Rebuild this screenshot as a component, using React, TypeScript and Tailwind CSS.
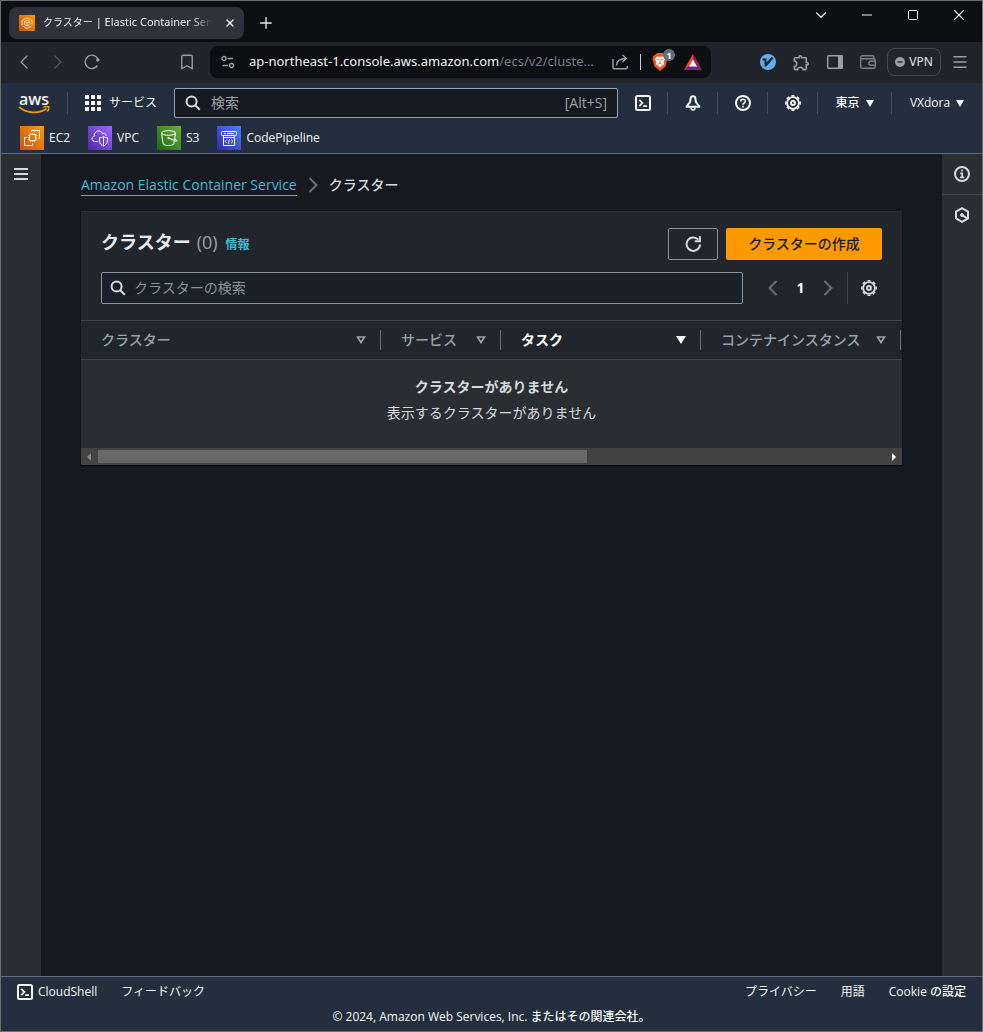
import type { ReactNode } from 'react';
import {
  Bookmark,
  ChevronDown,
  ChevronLeft,
  ChevronRight,
  Menu,
  Minus,
  Plus,
  Square,
  X,
} from 'lucide-react';
import { MdOutlineExtension } from 'react-icons/md';

function Icon({ children }: { children: ReactNode }) {
  return (
    <svg
      viewBox="0 0 16 16"
      className="size-4 shrink-0"
      fill="none"
      stroke="currentColor"
      strokeWidth="2"
      aria-hidden="true"
    >
      {children}
    </svg>
  );
}

const SearchIcon = () => (
  <Icon>
    <circle cx="6.6" cy="6.6" r="5" />
    <path d="m10.2 10.2 4.6 4.6" />
  </Icon>
);

const ShellIcon = () => (
  <Icon>
    <rect x="1" y="1" width="14" height="14" rx="1.5" />
    <path d="m4.2 4.8 3.2 3.2-3.2 3.2M8.2 11.2H12" strokeWidth="1.7" />
  </Icon>
);

const BellIcon = () => (
  <Icon>
    <path d="M8 1.200C6.600 1.200 5.800 2.100 5.600 3.500L5.200 6.500C5 8 2.800 9.300 1.500 11.800h13C13.200 9.300 11 8 10.800 6.500l-.4-3C10.200 2.100 9.400 1.200 8 1.200z" strokeLinejoin="round" />
    <path d="M6 12.200c0 3.600 4 3.600 4 0" strokeWidth="1.700" />
  </Icon>
);

const HelpIcon = () => (
  <Icon>
    <circle cx="8" cy="8" r="7" />
    <path d="M5.700 6.600c0-1.500 1-2.300 2.300-2.300s2.300.8 2.300 2c0 1.700-2.300 1.700-2.300 3.400M8 10.700v1.700" strokeWidth="1.600" />
  </Icon>
);

const GearIcon = () => (
  <Icon>
    <circle cx="8" cy="8" r="5.900" strokeWidth="1.900" />
    <circle cx="8" cy="8" r="7.200" strokeWidth="1.500" pathLength="16" strokeDasharray="1.100 .9" strokeDashoffset="0.550" />
    <circle cx="8" cy="8" r="2" strokeWidth="1.900" />
  </Icon>
);

const RefreshIcon = () => (
  <Icon>
    <path d="M15 8.500A6.700 6.700 0 1 1 13.300 3.700" />
    <path d="M14.900.3v5H9.800" />
  </Icon>
);

const InfoIcon = () => (
  <Icon>
    <circle cx="8" cy="8" r="7" />
    <path d="M8 3.600v2M6.200 7.300h2v4.200M6 11.300h4.200" strokeWidth="1.700" />
  </Icon>
);

const HexIcon = () => (
  <Icon>
    <path d="M8 1.200 14 4.600v6.800l-6 3.400-6-3.400V4.600z" />
    <circle cx="8" cy="8" r="1.500" fill="currentColor" strokeWidth="1" />
    <path d="m8.500 8.500 5 2.800" />
  </Icon>
);

const MenuBars = () => (
  <Icon>
    <path d="M1 3h14M1 8h14M1 13h14" />
  </Icon>
);

function Angle({ dir }: { dir: 'left' | 'right' }) {
  return (
    <Icon>
      <path d={dir === 'left' ? 'm11.500 1-7 7 7 7' : 'm4.500 1 7 7-7 7'} />
    </Icon>
  );
}

const MenuCaret = () => (
  <svg viewBox="0 0 8 7" className="h-[7px] w-2 shrink-0" aria-hidden="true">
    <path d="M0 0h8L4 7z" fill="currentColor" />
  </svg>
);

function SortCaret({ active }: { active: boolean }) {
  return (
    <svg viewBox="0 0 10 8" className="h-2 w-2.5 shrink-0" aria-hidden="true">
      {active ? (
        <path d="M0 0h10L5 8z" fill="currentColor" />
      ) : (
        <path d="M1.500 1h7L5 6.500z" fill="none" stroke="currentColor" strokeWidth="1.700" />
      )}
    </svg>
  );
}

const EcsFavicon = () => (
  <svg viewBox="0 0 16 16" className="size-4 shrink-0" aria-hidden="true">
    <defs>
      <linearGradient id="ecs" x1="0" y1="1" x2="1" y2="0">
        <stop stopColor="#c8511b" />
        <stop offset="1" stopColor="#f90" />
      </linearGradient>
    </defs>
    <path fill="url(#ecs)" d="M0 0h16v16H0z" />
    <g fill="none" stroke="#ffe0b8" strokeWidth=".9">
      <path d="M3 10.500v-5L8 2.700l5 2.800v4M12.500 11 8 13.500 3.700 11" />
      <path d="m8 5 2.700 1.500v3L8 11 5.300 9.500v-3zM5.300 6.500 8 8l2.700-1.500M8 8v3" />
    </g>
  </svg>
);

function Tile({ id, from, to, children }: { id: string; from: string; to: string; children: ReactNode }) {
  return (
    <svg viewBox="0 0 24 24" className="size-6 shrink-0" aria-hidden="true">
      <defs>
        <linearGradient id={id} x1="0" y1="1" x2="1" y2="0">
          <stop stopColor={from} />
          <stop offset="1" stopColor={to} />
        </linearGradient>
      </defs>
      <path fill={`url(#${id})`} d="M0 0h24v24H0z" />
      <g fill="none" stroke="#fff" strokeWidth="1" strokeLinejoin="round">
        {children}
      </g>
    </svg>
  );
}

const favorites: { name: string; icon: ReactNode }[] = [
  {
    name: 'EC2',
    icon: (
      <Tile id="ec2" from="#c8511b" to="#f90">
        <rect x="9.500" y="8.500" width="6" height="6" />
        <path
          d="M10.500 7v1.500M12.500 7v1.500M14.500 7v1.500M10.500 14.500V16M12.500 14.500V16M14.500 14.500V16M8 9.500h1.500M8 11.500h1.500M8 13.500h1.500M15.500 9.500H17M15.500 11.500H17M15.500 13.500H17"
          strokeWidth=".8"
        />
        <path d="M11.500 6V4.500h8v8H18M7 11.500H4.500v8h8V17.500" />
      </Tile>
    ),
  },
  {
    name: 'VPC',
    icon: (
      <Tile id="vpc" from="#4d27a8" to="#a166ff">
        <path d="M10 15.500H7.200C3.500 15.500 3 10.800 6.300 10.200 5.800 4.500 13 3 14.500 7.700c2-1 3.600.3 3.700 2.300" />
        <path d="M15.500 10.500c1.300 1 2.300 1.200 4 1.200v3.300c0 2.500-1.800 4-4 5-2.200-1-4-2.500-4-5v-3.300c1.700 0 2.700-.2 4-1.200zM15.500 11v8" />
      </Tile>
    ),
  },
  {
    name: 'S3',
    icon: (
      <Tile id="s3" from="#1b660f" to="#6cae3e">
        <ellipse cx="11.500" cy="7" rx="7" ry="2.300" />
        <path d="m4.500 7 1.700 11c1.500 2 9 2 10.600 0L18.500 7M11.500 12l7.500 3.200c1.500.3.700-1.500-1-2.500" />
        <circle cx="11.500" cy="12" r=".7" fill="#fff" />
      </Tile>
    ),
  },
  {
    name: 'CodePipeline',
    icon: (
      <Tile id="pipeline" from="#2e27ad" to="#527fff">
        <rect x="4.500" y="5.500" width="15" height="4" rx="1" />
        <path d="M6.500 9.500v10h11v-10M6.500 11.500h11M7 7.500h1.500M10 7.500h7" />
        <path d="m9.800 13.500-1.800 1.800 1.800 1.800M14.200 13.500l1.800 1.800-1.800 1.800M12.600 13l-1.200 4.800" strokeWidth=".9" />
      </Tile>
    ),
  },
];

function BrowserTabs() {
  return (
    <div className="flex h-[41px] bg-[#0d0e12]">
      <div className="flex flex-1 items-center gap-2 pl-2 pt-0.5">
        <div className="flex h-8 w-[235px] items-center gap-2 rounded-lg bg-[#2f323b] pl-2.5 pr-1 text-[#eceef2]">
          <EcsFavicon />
          <span className="w-[171px] overflow-hidden whitespace-nowrap text-[11px] [mask-image:linear-gradient(to_right,black_88%,transparent)]">
            <span className="text-[10px]">クラスター</span> | Elastic Container Service
          </span>
          <button aria-label="タブを閉じる" className="flex size-5 items-center justify-center">
            <X className="size-3" strokeWidth={3} />
          </button>
        </div>
        <button aria-label="新しいタブ" className="flex size-7 items-center justify-center text-[#e6e8ec]">
          <Plus className="size-[18px]" strokeWidth={1.8} />
        </button>
      </div>
      <div className="flex h-7 text-[#eceef2]">
        <button aria-label="タブを検索" className="flex w-[46px] items-center justify-center">
          <ChevronDown className="size-[18px]" strokeWidth={1.5} />
        </button>
        <button aria-label="最小化" className="flex w-[46px] items-center justify-center">
          <Minus className="size-4" strokeWidth={1.5} />
        </button>
        <button aria-label="最大化" className="flex w-[46px] items-center justify-center">
          <Square className="size-3" strokeWidth={2} />
        </button>
        <button aria-label="閉じる" className="flex w-[46px] items-center justify-center">
          <X className="size-[18px]" strokeWidth={1.5} />
        </button>
      </div>
    </div>
  );
}

function BrowserToolbar() {
  return (
    <div className="flex h-[41px] items-center bg-[#21242b] pb-px text-[#9a9fac]">
      <div className="flex flex-1 items-center pl-1.5">
        <button aria-label="戻る" className="flex w-[34px] justify-center">
          <ChevronLeft className="size-6" strokeWidth={1.3} />
        </button>
        <button aria-label="進む" className="flex w-[34px] justify-center text-[#545865]">
          <ChevronRight className="size-6" strokeWidth={1.3} />
        </button>
        <button aria-label="再読み込み" className="flex w-[34px] justify-center">
          <svg viewBox="0 0 18 18" className="size-[18px]" fill="none" stroke="currentColor" strokeWidth="1.400">
            <path d="M14.500 12.500A6.700 6.700 0 1 1 14.800 5.800" />
            <circle cx="14.800" cy="7" r="1.700" fill="currentColor" stroke="none" />
          </svg>
        </button>
      </div>
      <button aria-label="ブックマーク" className="flex w-[46px] justify-center">
        <Bookmark className="size-[18px]" strokeWidth={1.8} />
      </button>
      <div className="flex h-8 w-[501px] items-center rounded-lg bg-[#0d0e12] pl-[11px] pr-[9px]">
        <svg viewBox="0 0 14 14" className="mr-3.5 size-3.5 shrink-0" fill="none" stroke="currentColor" strokeWidth="1.300">
          <circle cx="3" cy="3.500" r="2" />
          <path d="M6.500 3.500H12M1.500 10.500H7" />
          <circle cx="10.500" cy="10.500" r="2" />
        </svg>
        <span className="min-w-0 flex-1 whitespace-nowrap text-[13px] text-[#767b88]">
          <span className="text-[#f2f3f5]">ap-northeast-1.console.aws.amazon.com</span>/ecs/v2/cluste…
        </span>
        <button aria-label="共有" className="ml-3 flex">
          <svg viewBox="0 0 18 18" className="size-[18px]" fill="none" stroke="currentColor" strokeWidth="1.400">
            <path d="M2 6v8.500c0 .8.500 1.300 1.300 1.300H15c.8 0 1.300-.5 1.300-1.300V13" />
            <path d="M5.500 12.500c.2-4.500 3-7 9.500-7M11.500 2l3.700 3.500-3.700 3.500" />
          </svg>
        </button>
        <span className="mx-[11px] h-4 w-px bg-[#c5c8ce]" />
        <button aria-label="Brave Shields" className="relative flex">
          <svg viewBox="0 0 16 18" className="h-[18px] w-4" aria-hidden="true">
            <path d="M5 0h6l1.500 1.500L15 3l.5 3-2 7.500L8 18l-5.500-4.500-2-7.500L1 3l2.500-1.500z" fill="#f0561f" />
            <path d="m8 4 2.800-.8 2.400 3-1.700 2.800.7 2L8 14.300 3.800 11l.7-2-1.700-2.800 2.400-3z" fill="#fff" />
            <path d="M4.700 6 7 7M11.300 6 9 7M8 7.500V10M6 11.500 8 10l2 1.500" fill="none" stroke="#f0561f" strokeWidth=".9" />
          </svg>
          <span className="absolute -right-[7px] -top-1 flex size-3 items-center justify-center rounded-full bg-[#686d7a] text-[9px] font-bold leading-none text-white">
            1
          </span>
        </button>
        <button aria-label="Brave Rewards" className="ml-4 flex">
          <svg viewBox="0 0 18 16" className="h-4 w-[18px]" aria-hidden="true">
            <path d="M9 0v6.500L5.500 12 0 16z" fill="#ff4724" />
            <path d="M9 0v6.500l3.500 5.500L18 16z" fill="#9e1f63" />
            <path d="m0 16 5.500-4h7l5.500 4z" fill="#662d91" />
            <path d="m9 5.500 4 7H5z" fill="#fff" />
          </svg>
        </button>
      </div>
      <div className="flex w-[271px] shrink-0 items-center justify-end pr-[13px]">
        <button aria-label="Vimium" className="flex w-8 justify-center">
          <svg viewBox="0 0 16 16" className="size-4" aria-hidden="true">
            <circle cx="8" cy="8" r="8" fill="#62aee6" />
            <path d="M2.500 4.500h4v4L11.500 3l2 1-7 8.500h-2v-6h-2z" fill="#17222e" />
          </svg>
        </button>
        <button aria-label="拡張機能" className="flex w-[34px] justify-center">
          <MdOutlineExtension className="size-[19px]" />
        </button>
        <button aria-label="サイドバー" className="flex w-[33px] justify-center">
          <svg viewBox="0 0 16 14" className="h-3.5 w-4" aria-hidden="true">
            <rect x=".7" y=".7" width="14.600" height="12.600" rx="1" fill="none" stroke="currentColor" strokeWidth="1.400" />
            <path d="M11 0h4.500v14H11z" fill="currentColor" />
          </svg>
        </button>
        <button aria-label="ウォレット" className="flex w-[34px] justify-center text-[#7b7f8c]">
          <svg viewBox="0 0 16 14" className="h-3.5 w-4" fill="none" stroke="currentColor" strokeWidth="1.400" aria-hidden="true">
            <path d="M15.200 10.500v1.300c0 .8-.6 1.500-1.500 1.500H2.200c-.8 0-1.500-.7-1.500-1.500V2.200C.7 1.400 1.400.7 2.200.7h10.300c.8 0 1.300.5 1.300 1.300v1.500M.9 3.700h12.800c.9 0 1.500.6 1.500 1.500v.8" />
            <path d="M15.300 6.300h-4.500a2 2 0 0 0 0 4h4.500z" />
          </svg>
        </button>
        <button className="ml-0.5 flex h-7 w-[54px] items-center justify-center gap-1 rounded-lg border border-[#464a56] text-xs text-[#e3e5ea]">
          <svg viewBox="0 0 10 10" className="size-2.5" aria-hidden="true">
            <circle cx="5" cy="5" r="5" fill="#9a9fac" />
            <path d="M2.500 5h5" stroke="#21242b" strokeWidth="1.400" />
          </svg>
          VPN
        </button>
        <button aria-label="メニュー" className="ml-2.5 flex">
          <Menu className="size-[18px]" strokeWidth={1.8} />
        </button>
      </div>
    </div>
  );
}

function AwsLogo() {
  return (
    <a href="#home" aria-label="AWS" className="flex flex-col items-center text-[#f2f3f3]">
      <span className="text-base font-semibold leading-[14px]">aws</span>
      <svg viewBox="0 0 32 8" className="h-2 w-8" fill="none" stroke="#f90" strokeWidth="1.700" aria-hidden="true">
        <path d="M.8.8C9 7.800 21.500 7.800 28.500 2.800" />
        <path d="M25.300 1.200c2.500-.8 5.700-.7 5.700-.2s-.5 3.200-1.800 4.600" strokeWidth="1.400" />
      </svg>
    </a>
  );
}

function HeaderButton({ label, children }: { label: string; children: ReactNode }) {
  return (
    <button aria-label={label} className="flex h-[22px] w-[50px] items-center justify-center border-r border-[#414d5c]">
      {children}
    </button>
  );
}

function ConsoleHeader() {
  return (
    <header className="border-b border-[#5f6b7a] bg-[#232f3e] pb-[3px] text-[#f6f7f7]">
      <div className="flex h-10 items-center">
        <div className="flex h-[22px] w-[67px] items-center justify-center border-r border-[#414d5c]">
          <AwsLogo />
        </div>
        <button className="flex items-center gap-2 px-[17px] text-xs">
          <svg viewBox="0 0 16 16" className="size-4" fill="currentColor" aria-hidden="true">
            <path d="M0 0h4v4H0zM6 0h4v4H6zM12 0h4v4h-4zM0 6h4v4H0zM6 6h4v4H6zM12 6h4v4h-4zM0 12h4v4H0zM6 12h4v4H6zM12 12h4v4h-4z" />
          </svg>
          サービス
        </button>
        <label className="flex h-[30px] min-w-0 flex-1 items-center gap-2.5 rounded-xs border border-[#95a5a6] bg-[#16191f] px-2.5 text-sm text-[#95a5a6]">
          <span className="text-[#d5dbdb]">
            <SearchIcon />
          </span>
          <input
            type="search"
            aria-label="検索"
            placeholder="検索"
            className="min-w-0 flex-1 bg-transparent outline-none placeholder:text-[#95a5a6]"
          />
          <span>[Alt+S]</span>
        </label>
        <HeaderButton label="CloudShell">
          <ShellIcon />
        </HeaderButton>
        <HeaderButton label="通知">
          <BellIcon />
        </HeaderButton>
        <HeaderButton label="ヘルプ">
          <HelpIcon />
        </HeaderButton>
        <HeaderButton label="設定">
          <GearIcon />
        </HeaderButton>
        <button className="flex h-[22px] w-[74px] items-center justify-center gap-1.5 border-r border-[#414d5c] text-xs font-medium">
          東京 <MenuCaret />
        </button>
        <button className="flex h-[22px] w-[90px] items-center justify-center gap-1.5 text-xs font-medium">
          VXdora <MenuCaret />
        </button>
      </div>
      <nav aria-label="お気に入り" className="flex items-center gap-[18px] px-[19px] pt-[3px]">
        {favorites.map((item) => (
          <a key={item.name} href={`#${item.name}`} className="flex items-center gap-[5px] text-xs font-medium">
            {item.icon}
            {item.name}
          </a>
        ))}
      </nav>
    </header>
  );
}

const columns = [
  { label: 'クラスター', width: 'w-[300px]', active: false },
  { label: 'サービス', width: 'w-[120px]', active: false },
  { label: 'タスク', width: 'w-[200px]', active: true },
  { label: 'コンテナインスタンス', width: 'w-[200px]', active: false },
];

function ClustersPanel() {
  return (
    <section className="mt-[15px] border-t border-[#2a2e33] bg-[#21252c] text-sm text-[#d5dbdb] shadow-[0_1px_1px_#000]">
      <div className="flex items-start justify-between px-5 pt-4">
        <h1 className="flex items-baseline gap-1.5 text-lg font-bold leading-7 text-[#eaeded]">
          クラスター
          <span className="font-normal text-[#95a5a6]">(0)</span>
          <a href="#info" className="ml-0.5 text-xs font-bold text-[#44b9d6]">
            情報
          </a>
        </h1>
        <div className="flex gap-2">
          <button
            aria-label="更新"
            className="flex h-8 w-[50px] items-center justify-center rounded-xs border border-[#879596] bg-[#21252c]"
          >
            <RefreshIcon />
          </button>
          <button className="flex h-8 w-[156px] items-center justify-center rounded-xs bg-[#f90] font-medium text-[#16191f]">
            クラスターの作成
          </button>
        </div>
      </div>
      <div className="flex items-center px-5 pb-4 pt-3">
        <label className="flex h-8 min-w-0 flex-1 items-center gap-2 rounded-xs border border-[#879596] bg-[#1a2029] px-2">
          <SearchIcon />
          <input
            type="search"
            aria-label="クラスターの検索"
            placeholder="クラスターの検索"
            className="min-w-0 flex-1 bg-transparent outline-none placeholder:text-[#879596]"
          />
        </label>
        <div className="ml-[22px] flex items-center">
          <button aria-label="前のページ" className="text-[#687078]">
            <Angle dir="left" />
          </button>
          <button className="w-[39px] text-center font-bold text-white">1</button>
          <button aria-label="次のページ" className="text-[#687078]">
            <Angle dir="right" />
          </button>
        </div>
        <span className="ml-[11px] h-8 w-px bg-[#414750]" />
        <button aria-label="設定" className="ml-[13px] mr-[5px] flex">
          <GearIcon />
        </button>
      </div>
      <div className="overflow-hidden">
        <table className="w-full table-fixed border-collapse">
          <thead>
            <tr className="h-[39px] border-y border-[#414750]">
              {columns.map((col) => (
                <th
                  key={col.label}
                  className={`${col.width} p-0 text-left ${col.active ? 'font-bold text-white' : 'font-medium text-[#95a5a6]'}`}
                >
                  <button className="flex h-5 w-full items-center justify-between border-r border-[#687078] pl-5 pr-3.5">
                    {col.label}
                    <SortCaret active={col.active} />
                  </button>
                </th>
              ))}
              <td className="p-0" />
            </tr>
          </thead>
          <tbody>
            <tr className="bg-[#2a2e33]">
              <td colSpan={5} className="px-5 pb-6 pt-4 text-center">
                <b className="block leading-[22px]">クラスターがありません</b>
                <span className="mt-1 block leading-[22px]">表示するクラスターがありません</span>
              </td>
            </tr>
          </tbody>
        </table>
      </div>
      <div className="flex h-[17px] items-center bg-[#424242]" aria-hidden="true">
        <svg viewBox="0 0 4 8" className="mx-1.5 h-2 w-1" fill="#868686">
          <path d="M4 0v8L0 4z" />
        </svg>
        <div className="flex-1">
          <div className="ml-px h-[13px] w-[62%] bg-[#686868]" />
        </div>
        <svg viewBox="0 0 4 8" className="mx-1.5 h-2 w-1" fill="#fff">
          <path d="M0 0v8l4-4z" />
        </svg>
      </div>
    </section>
  );
}

export default function App() {
  return (
    <div className="flex min-h-screen flex-col border border-[#6c6c6e] bg-[#16191f] font-['Open_Sans','Noto_Sans_CJK_JP',sans-serif]">
      <div className="font-['Noto_Sans','Noto_Sans_CJK_JP',sans-serif]">
        <BrowserTabs />
        <BrowserToolbar />
      </div>
      <ConsoleHeader />
      <div className="flex flex-1">
        <aside className="w-10 bg-[#2a2e33] pt-3 text-[#d5dbdb]">
          <button aria-label="ナビゲーションを開く" className="mx-auto flex">
            <MenuBars />
          </button>
        </aside>
        <main className="min-w-0 flex-1 px-10 pt-5">
          <nav aria-label="パンくずリスト" className="flex items-center gap-2 text-sm leading-[22px] text-[#d5dbdb]">
            <a href="#ecs" className="border-b border-[#44b9d6] leading-5 text-[#44b9d6]">
              Amazon Elastic Container Service
            </a>
            <span className="text-[#687078]">
              <Angle dir="right" />
            </span>
            <span className="font-medium">クラスター</span>
          </nav>
          <ClustersPanel />
        </main>
        <aside className="w-10 bg-[#2a2e33] text-[#d5dbdb]">
          <button aria-label="情報" className="flex h-[41px] w-full items-center justify-center border-b border-[#414750]">
            <InfoIcon />
          </button>
          <button aria-label="チュートリアル" className="flex h-10 w-full items-center justify-center">
            <HexIcon />
          </button>
        </aside>
      </div>
      <footer className="border-t border-[#5f6b7a] bg-[#232f3e] px-4 pb-1 pt-[5px] text-xs text-[#f6f7f7]">
        <div className="flex h-5 items-center justify-between">
          <div className="flex items-center gap-6">
            <button className="flex items-center gap-[5px] font-medium">
              <ShellIcon />
              CloudShell
            </button>
            <a href="#feedback">フィードバック</a>
          </div>
          <div className="flex gap-6">
            <a href="#privacy">プライバシー</a>
            <a href="#terms">用語</a>
            <button className="font-medium">Cookie の設定</button>
          </div>
        </div>
        <p className="mt-[5px] text-center leading-5 font-medium">© 2024, Amazon Web Services, Inc. またはその関連会社。</p>
      </footer>
    </div>
  );
}
